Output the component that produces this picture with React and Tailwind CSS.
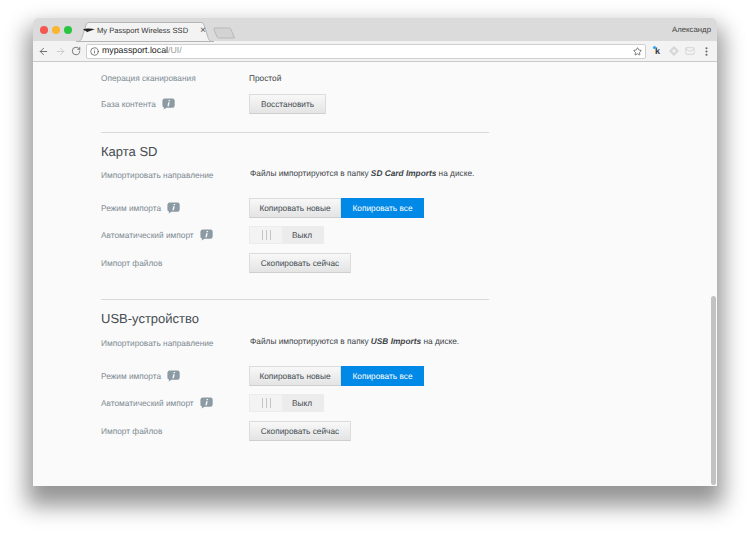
import React from 'react';
import { ArrowLeft, ArrowRight, RotateCw, Info, Star, MoreVertical, Mail } from 'lucide-react';

const InfoBubble = () => (
  <svg className="ml-[6px] shrink-0" width="13" height="12" viewBox="0 0 13 12">
    <path d="M3 0.5h7.5a2.2 2.2 0 0 1 2.2 2.2v4.8a2.2 2.2 0 0 1-2.2 2.2H4.5L1.6 11.6l.5-2A2.2 2.2 0 0 1 .4 7.5V2.700A2.500 2.500 0 0 1 3 .5z" fill="#8c9ba3" />
    <path d="M6.700 2h1.500l-.3 1.300H6.400zM6.200 4.300h1.500L6.900 8.300H5.400z" fill="#f4f6f7" />
  </svg>
);

const GreyButton = ({ children, className = '' }) => (
  <div className={`flex h-[20px] items-center justify-center border border-[#dcdcdc] border-b-[#cfcfcf] bg-gradient-to-b from-[#f8f8f8] to-[#e4e4e4] text-[#444b50] ${className}`}>
    {children}
  </div>
);

const Label = ({ children, info }) => (
  <div className="flex w-[148px] shrink-0 items-center text-[#7d8a92]">
    <span>{children}</span>
    {info && <InfoBubble />}
  </div>
);

const Row = ({ label, info, className = '', children }) => (
  <div className={`flex items-center ${className}`}>
    <Label info={info}>{label}</Label>
    {children}
  </div>
);

const ImportSection = ({ title, folder, headGap }) => (
  <div className="w-[388px]">
    <div className="border-t border-[#d9d9d9] pt-[10px] text-[13px] leading-[18px] text-[#454c51]">{title}</div>
    <Row label="Импортировать направление" className={`${headGap} h-[20px]`}>
      <div className="mb-[3px] ml-px whitespace-nowrap text-[#3d4448]">
        Файлы импортируются в папку <b className="italic">{folder}</b> на диске.
      </div>
    </Row>
    <Row label="Режим импорта" info className="mt-[13px] h-[20px]">
      <div className="flex">
        <GreyButton className="w-[92px]">Копировать новые</GreyButton>
        <div className="flex h-[20px] w-[83px] items-center justify-center bg-[#0089e6] text-white">Копировать все</div>
      </div>
    </Row>
    <Row label="Автоматический импорт" info className="mt-[8px] h-[18px]">
      <div className="flex h-[18px] w-[75px] border border-[#ececec] bg-[#ececec]">
        <div className="flex w-[32px] items-center justify-center gap-[3px] bg-[#f3f3f3]">
          <span className="h-[10px] w-px bg-[#c4c4c4]" />
          <span className="h-[10px] w-px bg-[#c4c4c4]" />
          <span className="h-[10px] w-px bg-[#c4c4c4]" />
        </div>
        <div className="flex-1 pl-[10px] leading-[16px] text-[#444b50]">Выкл</div>
      </div>
    </Row>
    <Row label="Импорт файлов" className="mt-[9px] h-[20px]">
      <GreyButton className="w-[102px]">Скопировать сейчас</GreyButton>
    </Row>
  </div>
);

export default function App() {
  return (
    <div className="h-[533px] w-[750px] overflow-hidden bg-white pl-[33px] pt-[18px] font-['Liberation_Sans',Arial,sans-serif] text-[8.3px] [text-rendering:geometricPrecision]">
      <div className="relative flex h-[468px] w-[684px] flex-col overflow-hidden rounded-t-[5px] shadow-[0_14px_22px_6px_rgba(0,0,0,0.42)]">
        {/* title bar */}
        <div className="relative flex h-[23px] shrink-0 items-center bg-[#dbdbdb] pl-[7px]">
          <div className="flex gap-[4px]">
            <span className="h-[8px] w-[8px] rounded-full bg-[#f4574f]" />
            <span className="h-[8px] w-[8px] rounded-full bg-[#f9b62e]" />
            <span className="h-[8px] w-[8px] rounded-full bg-[#2bc541]" />
          </div>
          <svg className="absolute left-[43px] top-[4px]" width="162" height="20" viewBox="0 0 162 20">
            <path d="M0 19.500c4 0 5-1 6-4L10 3c.6-2 1.500-2.500 3-2.500h112c1.500 0 2.400.5 3 2.500l4 12.500c1 3 2 4 6 4z" fill="#f3f3f3" stroke="#b5b5b5" />
            <path d="M139 6h14c1 0 1.500.4 2 1.500l3.500 8.500h-16c-.8 0-1.200-.3-1.500-1.200l-3-7.300c-.3-1 .2-1.500 1-1.500z" fill="#d3d3d3" stroke="#b9b9b9" />
          </svg>
          <div className="relative ml-[11px] flex w-[118px] items-center pt-[3px]">
            <svg width="12" height="5" viewBox="0 0 13 5"><path d="M0 1.500C3 0 9 .2 13 1.200 10 2 8 3 6 3.500L4 4.500 3.500 3C2 3 1 2.500 0 1.500z" fill="#222" /></svg>
            <span className="ml-[2px] whitespace-nowrap text-[7.6px] text-[#333]">My Passport Wireless SSD</span>
          </div>
          <span className="relative ml-[-1px] pt-[3px] text-[10px] leading-none text-[#555]">×</span>
          <span className="ml-auto pr-[6px] text-[7.8px] text-[#444]">Александр</span>
        </div>
        {/* toolbar */}
        <div className="flex h-[21px] shrink-0 items-center border-b border-[#c9c9c9] bg-[#f3f3f3] pl-[5px] pr-[5px]">
          <ArrowLeft size={11} strokeWidth={2} className="text-[#666]" />
          <ArrowRight size={11} strokeWidth={2} className="ml-[6px] text-[#c9c9c9]" />
          <RotateCw size={10} strokeWidth={2} className="ml-[5px] text-[#666]" />
          <div className="ml-[5px] flex h-[15px] w-[560px] items-center rounded-[2px] border border-[#cfcfcf] bg-white pl-[3px] pr-[3px]">
            <Info size={9} className="text-[#555]" />
            <span className="ml-[3px] text-[8.8px] text-[#222]">mypassport.local<span className="text-[#9a9a9a]">/UI/</span></span>
            <Star size={9} className="ml-auto text-[#555]" />
          </div>
          <span className="relative ml-[9px] text-[9px] font-bold leading-none text-[#333]">
            k
            <span className="absolute -left-[2px] -top-[1px] h-[3px] w-[3px] rounded-full bg-[#2aa8f2]" />
          </span>
          <svg className="ml-[9px]" width="10" height="10" viewBox="0 0 10 10"><path d="M5 0l5 5-5 5-5-5z" fill="#d6d6d6" /><path d="M5 3l2 2-2 2-2-2z" fill="#f3f3f3" /></svg>
          <Mail size={10} className="ml-[6px] text-[#cfcfcf]" />
          <MoreVertical size={11} strokeWidth={2.500} className="ml-auto text-[#666]" />
        </div>
        {/* page */}
        <div className="relative flex-1 bg-[#fafafa] pl-[68px] pt-[9px]">
          <Row label="Операция сканирования" className="mt-px h-[12px]">
            <span className="text-[#3d4448]">Простой</span>
          </Row>
          <Row label="База контента" info className="mt-[10px] h-[20px]">
            <GreyButton className="w-[77px]">Восстановить</GreyButton>
          </Row>
          <div className="mt-[18px]">
            <ImportSection title="Карта SD" folder="SD Card Imports" headGap="mt-[4px]" />
          </div>
          <div className="mt-[26px]">
            <ImportSection title="USB-устройство" folder="USB Imports" headGap="mt-[5px]" />
          </div>
          {/* scrollbar */}
          <div className="absolute bottom-[1px] right-[1px] top-[234px] w-[5px] rounded-full bg-[#c2c2c2]" />
        </div>
      </div>
    </div>
  );
}
